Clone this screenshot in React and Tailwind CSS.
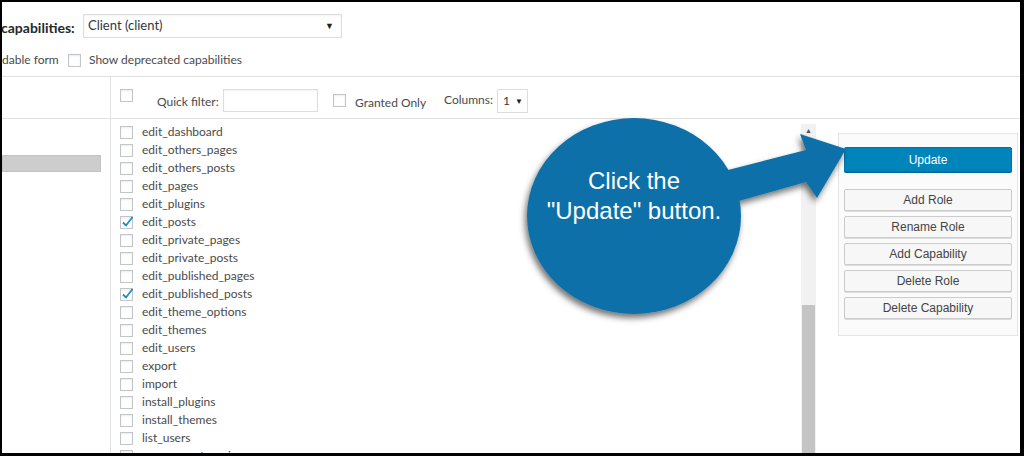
import React from 'react';

const caps = [
  { name: 'edit_dashboard' },
  { name: 'edit_others_pages' },
  { name: 'edit_others_posts' },
  { name: 'edit_pages' },
  { name: 'edit_plugins' },
  { name: 'edit_posts', on: true },
  { name: 'edit_private_pages' },
  { name: 'edit_private_posts' },
  { name: 'edit_published_pages' },
  { name: 'edit_published_posts', on: true },
  { name: 'edit_theme_options' },
  { name: 'edit_themes' },
  { name: 'edit_users' },
  { name: 'export' },
  { name: 'import' },
  { name: 'install_plugins' },
  { name: 'install_themes' },
  { name: 'list_users' },
  { name: 'manage_categories' },
];

const actions = ['Add Role', 'Rename Role', 'Add Capability', 'Delete Role', 'Delete Capability'];

function Box({ checked }) {
  return (
    <span className="relative inline-block w-[13px] h-[13px] shrink-0 border border-[#c3c6c9] bg-white shadow-[inset_0_1px_2px_rgba(0,0,0,0.08)]">
      {checked && (
        <svg className="absolute -left-[1px] -top-[3px]" width="15" height="15" viewBox="0 0 15 15">
          <path d="M3 8.5 L6 11.5 L12.5 3" fill="none" stroke="#1e8cbe" strokeWidth="1.8" />
        </svg>
      )}
    </span>
  );
}

export default function App() {
  return (
    <div className="relative w-[1024px] h-[456px] overflow-hidden bg-white border-black border-l-[2px] border-t-[2px] border-r-[4px] border-b-[3px] font-['Lato',sans-serif] text-[12px] text-[#4a4a4a]">
      {/* top settings */}
      <div className="h-[75px] border-b border-[#e1e1e1] pt-[12px]">
        <div className="flex items-center h-[24px]">
          <span className="w-[82px] -ml-[1px] mt-[2px] text-[14px] font-bold text-[#23282d]">capabilities:</span>
          <div className="w-[259px] h-[24px] border border-[#ddd] flex items-center justify-between pl-[4px] pr-[7px] text-[13px] text-[#32373c] shadow-[inset_0_1px_2px_rgba(0,0,0,0.05)]">
            <span>Client (client)</span>
            <span className="text-[9px] text-[#222]">▼</span>
          </div>
        </div>
        <div className="flex items-center h-[16px] mt-[14px]">
          <span className="w-[66px]">dable form</span>
          <Box />
          <span className="ml-[8px]">Show deprecated capabilities</span>
        </div>
      </div>

      {/* main */}
      <div className="flex h-[376px]">
        <div className="w-[109px] shrink-0 border-r border-[#e1e1e1]">
          <div className="h-[42px] border-b border-[#e1e1e1]" />
          <div className="mt-[36px] w-[99px] h-[17px] bg-[#cdcdcd] border border-[#c2c2c2]" />
        </div>

        <div className="flex-1 flex flex-col min-w-0">
          <div className="h-[42px] border-b border-[#e1e1e1] flex items-start pt-[12px] pl-[9px]">
            <Box />
            <span className="ml-[24px] mt-[5px] w-[66px] leading-[16px]">Quick filter:</span>
            <div className="w-[95px] h-[23px] border border-[#ddd] shadow-[inset_0_1px_2px_rgba(0,0,0,0.05)]" />
            <span className="ml-[15px] mt-[5px] flex"><Box /></span>
            <span className="ml-[9px] mt-[6px] w-[89px] leading-[16px]">Granted Only</span>
            <span className="mt-[3px] w-[53px] leading-[16px]">Columns:</span>
            <div className="w-[31px] h-[24px] border border-[#ddd] flex items-center justify-between pl-[5px] pr-[4px] text-[#32373c]">
              <span>1</span>
              <span className="text-[8px] text-[#222]">▼</span>
            </div>
          </div>

          <div className="flex flex-1 min-h-0">
            <div className="w-[690px] shrink-0 overflow-hidden pt-[4px] pl-[9px]">
              {caps.map((c) => (
                <div key={c.name} className="flex items-center h-[18px]">
                  <Box checked={c.on} />
                  <span className="ml-[9px]">{c.name}</span>
                </div>
              ))}
            </div>

            <div className="w-[15px] shrink-0 mt-[5px] bg-[#f1f1f1] flex flex-col">
              <div className="h-[12px] flex items-center justify-center text-[7px] text-[#505050] leading-none">▲</div>
              <div className="mt-[169px] flex-1 mx-[1px] bg-[#c4c4c4]" />
            </div>

            <div className="ml-[22px] mt-[14px] w-[180px] h-[203px] shrink-0 border border-[#e5e5e5] bg-[#fbfbfb] px-[5px] pt-[13px] font-['Liberation_Sans',Arial,sans-serif] text-[12px]">
              <div className="h-[25px] flex items-center justify-center rounded-[2px] bg-[#0085ba] border border-[#0073aa] text-white shadow-[0_1px_0_#006799]">
                Update
              </div>
              <div className="mt-[17px] flex flex-col gap-[5px]">
                {actions.map((a) => (
                  <div key={a} className="h-[22px] flex items-center justify-center rounded-[2px] bg-[#f7f7f7] border border-[#cccccc] text-[#444] shadow-[0_1px_0_#dcdcdc]">
                    {a}
                  </div>
                ))}
              </div>
            </div>
          </div>
        </div>
      </div>

      {/* callout overlay */}
      <svg className="absolute -left-[2px] -top-[2px] pointer-events-none" width="1024" height="456" viewBox="0 0 1024 456">
        <defs>
          <filter id="sh" x="-20%" y="-20%" width="140%" height="140%">
            <feDropShadow dx="-2" dy="4" stdDeviation="3" floodColor="#000" floodOpacity="0.55" />
          </filter>
        </defs>
        <g filter="url(#sh)" fill="#0f6fa8">
          <polygon points="728,170 806,150 800,134 846,149 817,198 806,182 735,202" />
          <ellipse cx="634" cy="216" rx="107" ry="98" />
        </g>
      </svg>
      <div className="absolute left-[525px] top-[164px] w-[214px] text-center text-white font-['Liberation_Sans',Arial,sans-serif] text-[24px] leading-[30px] pointer-events-none">
        <div>Click the</div>
        <div>"Update" button.</div>
      </div>
    </div>
  );
}
